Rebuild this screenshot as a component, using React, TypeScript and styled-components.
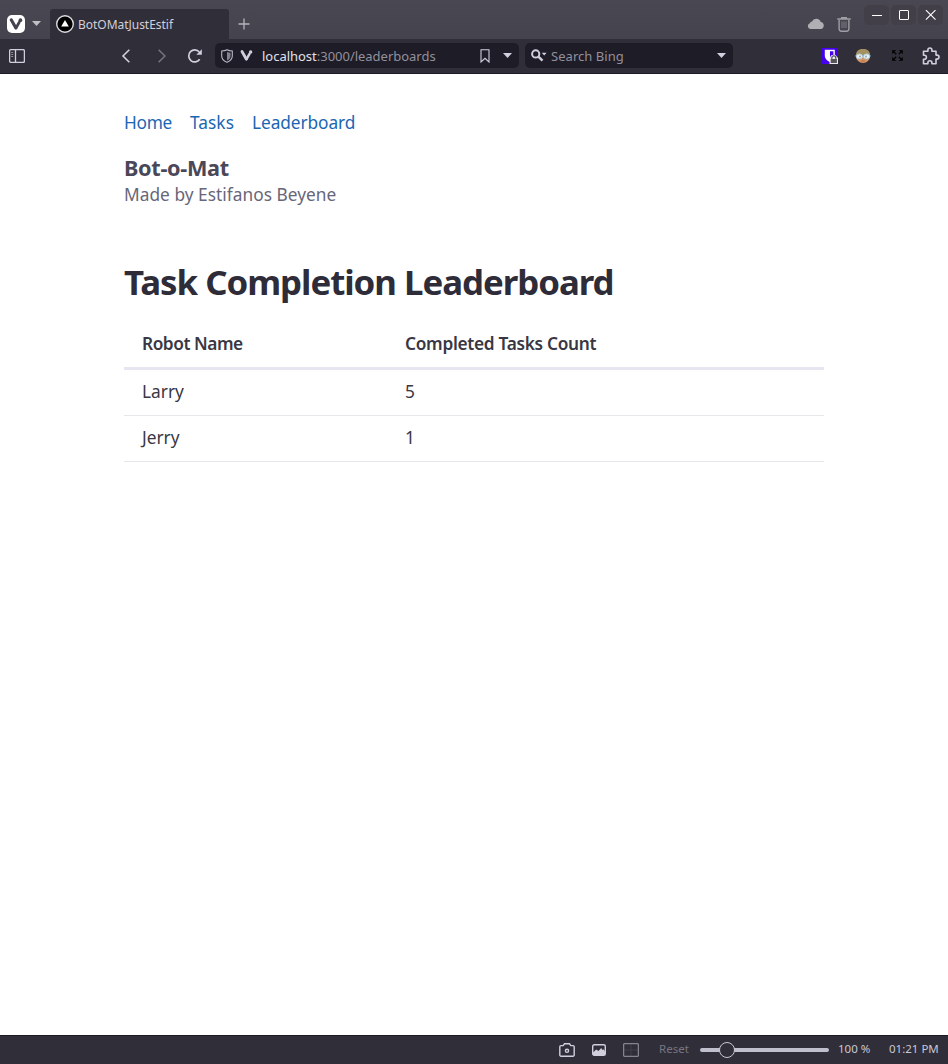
import React from "react";
import styled, { createGlobalStyle } from "styled-components";

const GlobalStyle = createGlobalStyle`
  * { box-sizing: border-box; }
  body { margin: 0; background: #fff; font-family: "Noto Sans", sans-serif; }
  svg { display: block; flex: none; }
`;

const Window = styled.div`
  display: flex;
  flex-direction: column;
  height: 1064px;
  width: 948px;
  overflow: hidden;
`;

const TabBar = styled.header`
  display: flex;
  flex: none;
  height: 39px;
  padding: 9px 5px 0 7px;
  background: linear-gradient(#494751, #45434d);
`;

const Slot = styled.span<{ $gap?: number; $top?: number }>`
  flex: none;
  margin-left: ${(p) => p.$gap ?? 0}px;
  margin-top: ${(p) => p.$top ?? 0}px;
`;

const Tab = styled.div`
  display: flex;
  gap: 4px;
  width: 179px;
  height: 30px;
  margin-left: 9px;
  padding: 5px 6px;
  border-radius: 3px 3px 0 0;
  background: #302e38;
  color: #d0cfdb;
  font-size: 12px;
  line-height: 22px;
`;

const TabTitle = styled.span`
  white-space: nowrap;
  letter-spacing: -0.03px;
`;

const Spacer = styled.div`
  flex: 1;
`;

const WindowButtons = styled.div`
  display: flex;
  gap: 2px;
  margin: -4px 0 0 13px;
`;

const WindowButton = styled.button`
  display: grid;
  place-items: center;
  width: 25px;
  height: 20px;
  padding: 0;
  border: 0;
  border-radius: 5px;
  background: #433f49;
`;

const Toolbar = styled.div`
  display: flex;
  flex: none;
  align-items: center;
  height: 35px;
  padding: 0 8px 1px 9px;
  background: #302e38;
  border-bottom: 1px solid #1c1a24;
`;

const Field = styled.div<{ $width: number; $gap: number }>`
  display: flex;
  align-items: center;
  width: ${(p) => p.$width}px;
  height: 25px;
  margin-left: ${(p) => p.$gap}px;
  padding: 0 7px 0 6px;
  border-radius: 5px;
  background: #1e1c26;
  color: #92909d;
  font-size: 13px;
  line-height: 20px;
  white-space: nowrap;
`;

const FieldText = styled.span<{ $gap: number; $spacing?: number }>`
  margin-left: ${(p) => p.$gap}px;
  letter-spacing: ${(p) => p.$spacing ?? 0}px;
`;

const Host = styled.span`
  color: #e2e1eb;
`;

const Page = styled.main`
  flex: 1;
  width: 700px;
  margin: 0 auto;
  padding-top: 35px;
  font-size: 18px;
  line-height: 27px;
`;

const Nav = styled.nav`
  display: flex;
  gap: 18px;
  height: 27px;
`;

const NavLink = styled.a<{ $width: number; $spacing: number }>`
  width: ${(p) => p.$width}px;
  color: #1a66b3;
  font-size: 17.3px;
  letter-spacing: ${(p) => p.$spacing}px;
  text-decoration: none;
  white-space: nowrap;
`;

const SiteName = styled.h2`
  margin: 18px 0 0;
  color: #4a4858;
  font-size: 21.7px;
  font-weight: 700;
  letter-spacing: -0.32px;
  line-height: 27px;
`;

const Byline = styled.p`
  margin: 0;
  color: #686679;
  font-size: 17.3px;
  letter-spacing: 0.03px;
`;

const Title = styled.h1`
  margin: 53px 0 0;
  color: #2e2c38;
  font-size: 34.8px;
  font-weight: 700;
  letter-spacing: -1.02px;
  line-height: 42px;
  white-space: nowrap;
`;

const Table = styled.table`
  width: 700px;
  margin-top: 18px;
  border-collapse: separate;
  border-spacing: 0;
  table-layout: fixed;
  color: #393744;
`;

const HeadCell = styled.th<{ $width?: number; $spacing: number }>`
  width: ${(p) => (p.$width ? p.$width + "px" : "auto")};
  height: 49px;
  padding: 0 18px 2px;
  border-bottom: 3px solid #e7e6f0;
  font-size: 17.3px;
  font-weight: 600;
  letter-spacing: ${(p) => p.$spacing}px;
  text-align: left;
`;

const Cell = styled.td`
  height: 46px;
  padding: 0 18px 2px;
  border-bottom: 1px solid #e7e6ea;
  font-size: 17.3px;
  letter-spacing: 0;
`;

const StatusBar = styled.footer`
  display: flex;
  flex: none;
  align-items: center;
  height: 29px;
  padding-left: 559px;
  border-top: 1px solid #1c1a24;
  background: #302e38;
  color: #c9c8d5;
  font-size: 11.5px;
  line-height: 18px;
  white-space: nowrap;
`;

const StatusText = styled.span<{ $gap: number; $width: number; $dim?: boolean }>`
  flex: none;
  width: ${(p) => p.$width}px;
  margin-left: ${(p) => p.$gap}px;
  padding-bottom: 2px;
  color: ${(p) => (p.$dim ? "#777582" : "inherit")};
`;

const Slider = styled.div`
  display: flex;
  align-items: center;
  width: 129px;
  height: 4px;
  margin-left: 11px;
  padding-left: 19px;
  border-radius: 2px;
  background: #c0bfce;
`;

const Thumb = styled.div`
  flex: none;
  width: 16px;
  height: 16px;
  border: 1px solid #c9c8d5;
  border-radius: 50%;
  background: #302e38;
`;

const light = "#cfcfdd";

function VMark({ size, color }: { size: number; color: string }) {
  return (
    <svg width={size} height={size} viewBox="0 0 12 12" fill="none" stroke={color} strokeLinecap="round" strokeLinejoin="round">
      <path d="M1.9 2.4 5.8 9.3" strokeWidth="2.7" />
      <path d="M6 9.4 8.8 4.5" strokeWidth="2.3" />
      <circle cx="9.8" cy="2.7" r="1.6" fill={color} stroke="none" />
    </svg>
  );
}

function Caret({ width = 9, color = light }: { width?: number; color?: string }) {
  return (
    <svg width={width} height="5" viewBox="0 0 9 5" fill={color}>
      <path d="M0 0H9L4.5 5Z" />
    </svg>
  );
}

const VivaldiButton = styled.div`
  display: grid;
  place-items: center;
  flex: none;
  width: 18px;
  height: 18px;
  margin-top: 6px;
  border-radius: 5px;
  background: #fff;
`;

function Tabs() {
  return (
    <TabBar>
      <VivaldiButton><VMark size={14} color="#45434d" /></VivaldiButton>
      <Slot $gap={7} $top={12}><Caret color="#c0bfc5" /></Slot>
      <Tab>
        <svg width="18" height="20" viewBox="0 0 18 20">
          <circle cx="9" cy="10" r="8.3" fill="#000" stroke="#dddce2" strokeWidth="1.4" />
          <path d="M9 6 12.8 12.5H5.2Z" fill="#fff" />
        </svg>
        <TabTitle>BotOMatJustEstif</TabTitle>
      </Tab>
      <Slot $gap={9} $top={9}>
        <svg width="12" height="12" viewBox="0 0 12 12" stroke="#b6b4bb" strokeWidth="1.3"><path d="M6 .5v11M.5 6h11" /></svg>
      </Slot>
      <Spacer />
      <Slot $top={9}>
        <svg width="18" height="12" viewBox="0 0 18 12" fill="#b0afb4">
          <path d="M3.5 11A3 3 0 0 1 2.8 5.2 3.2 3.2 0 0 1 5 3.5 4.7 4.7 0 0 1 13.7 4 3.6 3.6 0 0 1 14.2 11Z" />
        </svg>
      </Slot>
      <Slot $gap={12} $top={8}>
        <svg width="14" height="15" viewBox="0 0 14 15" fill="none" stroke="#a09ea5">
          <path d="M2.1 3v9A2.2 2.2 0 0 0 4 14.2h6a2.2 2.2 0 0 0 1.9-2.2V3" strokeWidth="1.4" />
          <path d="M.3 2h13.4M4 .7h6" strokeWidth="1.4" />
          <path d="M5 4.5V11M7 4.5V11M9 4.5V11" stroke="#7e7c85" />
        </svg>
      </Slot>
      <WindowButtons>
        <WindowButton><svg width="11" height="11"><path d="M1 5.5h10" stroke="#fff" /></svg></WindowButton>
        <WindowButton><svg width="11" height="11"><rect x="1.5" y=".5" width="9" height="9" rx=".5" fill="none" stroke="#fff" /></svg></WindowButton>
        <WindowButton><svg width="11" height="11"><path d="m.9.1 9.6 9.6m0-9.6L.9 9.7" stroke="#fff" strokeWidth="1.1" /></svg></WindowButton>
      </WindowButtons>
    </TabBar>
  );
}

function AddressBar() {
  return (
    <Toolbar>
      <svg width="16" height="14" viewBox="0 0 16 14" fill="none" stroke={light} strokeWidth="1.3">
        <rect x=".6" y=".6" width="14.8" height="12.8" rx="1.3" />
        <path d="M6.5 1v12" />
        <path d="M2.2 3.5h2M2.2 5.5h2M2.2 7.5h2" stroke="#91909d" strokeWidth="1" />
      </svg>
      <Slot $gap={96}><svg width="10" height="14" fill="none" stroke={light} strokeWidth="1.6"><path d="M8.3.8 2 7l6.3 6.2" /></svg></Slot>
      <Slot $gap={26}><svg width="10" height="14" fill="none" stroke="#777580" strokeWidth="1.5"><path d="M1.6.8 7.9 7l-6.3 6.2" /></svg></Slot>
      <Slot $gap={20}>
        <svg width="16" height="16" viewBox="0 0 16 16" fill="none" stroke={light} strokeWidth="1.7">
          <path d="M12.7 11.3A6 6 0 1 1 12.3 4" />
          <path d="M14.8 1.2v5.5H9.3Z" fill={light} stroke="none" />
        </svg>
      </Slot>
      <Field $width={304} $gap={12}>
        <svg width="12" height="14" viewBox="0 0 12 14">
          <path d="M6 .8C4.3 1.8 2.6 2 .7 2v5c0 3 2 5 5.3 6.3C9.3 12 11.3 10 11.3 7V2C9.4 2 7.7 1.8 6 .8Z" fill="none" stroke="#b8b7c5" strokeWidth="1.1" />
          <path d="M6 3C7.3 3.6 8.2 3.7 9.5 3.8V7c0 2-1.3 3.5-3.5 4.5Z" fill="#858391" />
        </svg>
        <Slot $gap={7}><VMark size={13} color={light} /></Slot>
        <FieldText $gap={9} $spacing={-0.02}><Host>localhost</Host>:3000/leaderboards</FieldText>
        <Spacer />
        <svg width="10" height="14" fill="none" stroke={light} strokeWidth="1.1"><path d="M1 .8h8V13L5 9.3 1 13Z" /></svg>
        <Slot $gap={13}><Caret /></Slot>
      </Field>
      <Field $width={208} $gap={6}>
        <svg width="16" height="13" viewBox="0 0 16 13" fill="none" stroke={light}>
          <circle cx="4.7" cy="4.9" r="3.6" strokeWidth="2" />
          <path d="m7.4 7.6 4.1 4.1" strokeWidth="2.4" />
          <path d="M10.8 3.7h4.8l-2.4 2.7Z" fill={light} stroke="none" />
        </svg>
        <FieldText $gap={4} $spacing={0.04}>Search Bing</FieldText>
        <Spacer />
        <Caret />
      </Field>
      <Spacer />
      <svg width="16" height="16" viewBox="0 0 16 16">
        <path fill="#4500ed" d="M0 0h16v16H0Z" />
        <path d="M2.8 1.8h10v6c0 3-2 5-5 6.2C4.5 12.5 2.8 10.3 2.8 7.8Z" fill="#fff" />
        <path d="M8 3.2h3.4v5c0 1.8-1.3 3-3.4 4Z" fill="#4500ed" />
        <path d="M7.5 16V10l2-3h4l2.5 3v6Z" fill="#e8e6ee" />
        <path d="M9.8 11.5V9.9a2 2 0 0 1 4 0v1.6" fill="none" stroke="#555" strokeWidth="1.2" />
        <path d="M8.7 11h6.2v4H8.7Z" fill="#555" />
      </svg>
      <Slot $gap={17}>
        <svg width="16" height="16" viewBox="0 0 16 16">
          <circle cx="8" cy="8" r="7" fill="#d59667" />
          <path d="M1 7C.9 3 4 1 8 1s7.1 2 7 6H1Z" fill="#a59060" />
          <path d="M0 7.7h16" stroke="#497795" strokeWidth="1.5" />
          <ellipse cx="4.4" cy="8.4" rx="3.1" ry="2.5" fill="#e9f3f5" stroke="#b2cbd4" />
          <ellipse cx="11.6" cy="8.4" rx="3.1" ry="2.5" fill="#e9f3f5" stroke="#b2cbd4" />
          <circle cx="5" cy="8.4" r="1" fill="#8fa9b4" /><circle cx="11" cy="8.4" r="1" fill="#8fa9b4" />
          <path d="M6.3 13h3.4" stroke="#ad6848" />
        </svg>
      </Slot>
      <Slot $gap={21}>
        <svg width="11" height="11" viewBox="0 0 11 11" fill="#050505" stroke="#050505" strokeWidth="1.3">
          <path d="M.5.5h3l-3 3ZM10.5.5h-3l3 3ZM.5 10.5h3l-3-3ZM10.5 10.5h-3l3-3Z" strokeWidth=".7" />
          <path d="m1 1 3.2 3.2M10 1 6.8 4.2M1 10l3.2-3.2M10 10 6.8 6.8" />
        </svg>
      </Slot>
      <Slot $gap={19}>
        <svg width="18" height="18" viewBox="0 0 18 18" fill="none" stroke={light} strokeWidth="1.6" strokeLinejoin="round">
          <path d="M1.5 4.2h4.4V3a2 2 0 0 1 4 0v1.2H14v3.9h1a2 2 0 0 1 0 4h-1v4.6H9.9v-1a2 2 0 0 0-4 0v1H1.5v-4.4h.9a2 2 0 0 0 0-4h-.9Z" />
        </svg>
      </Slot>
    </Toolbar>
  );
}

const robots = [
  { name: "Larry", completed: 5 },
  { name: "Jerry", completed: 1 },
];

function Leaderboard() {
  return (
    <Page>
      <Nav>
        <NavLink $width={48} $spacing={-0.3}>Home</NavLink>
        <NavLink $width={44} $spacing={0.05}>Tasks</NavLink>
        <NavLink $width={104} $spacing={-0.08}>Leaderboard</NavLink>
      </Nav>
      <SiteName>Bot-o-Mat</SiteName>
      <Byline>Made by Estifanos Beyene</Byline>
      <Title>Task Completion Leaderboard</Title>
      <Table>
        <thead>
          <tr>
            <HeadCell $width={263} $spacing={-0.45}>Robot Name</HeadCell>
            <HeadCell $spacing={-0.3}>Completed Tasks Count</HeadCell>
          </tr>
        </thead>
        <tbody>
          {robots.map((robot) => (
            <tr key={robot.name}>
              <Cell>{robot.name}</Cell>
              <Cell>{robot.completed}</Cell>
            </tr>
          ))}
        </tbody>
      </Table>
    </Page>
  );
}

function Status() {
  return (
    <StatusBar>
      <svg width="16" height="14" viewBox="0 0 16 14" fill="none" stroke={light} strokeWidth="1.4">
        <path d="M2 2.6h2.2L5.5.8h5l1.3 1.8H14a1.2 1.2 0 0 1 1.2 1.2V12a1.2 1.2 0 0 1-1.2 1.2H2A1.2 1.2 0 0 1 .8 12V3.8A1.2 1.2 0 0 1 2 2.6Z" />
        <circle cx="8" cy="7.8" r="1.6" />
      </svg>
      <Slot $gap={17}>
        <svg width="14" height="12" viewBox="0 0 14 12" fill="none" stroke={light} strokeWidth="1.4">
          <rect x=".7" y=".7" width="12.6" height="10.6" rx="1.5" />
          <path d="M1 11V8.5l3.2-3L6.5 7l2.7-3 1.3 2 1-.8L13 7.5V11Z" fill={light} stroke="none" />
        </svg>
      </Slot>
      <Slot $gap={17}>
        <svg width="16" height="14" viewBox="0 0 16 14" fill="none" stroke="#85838f" strokeWidth="1.3">
          <path d="M8 1v12M1 7h14" stroke="#413f49" strokeWidth="1" />
          <rect x=".6" y=".6" width="14.8" height="12.8" rx="1.2" />
        </svg>
      </Slot>
      <StatusText $gap={20} $width={30} $dim>Reset</StatusText>
      <Slider><Thumb /></Slider>
      <StatusText $gap={9} $width={33}>100 %</StatusText>
      <StatusText $gap={18} $width={50}>01:21 PM</StatusText>
    </StatusBar>
  );
}

export default function App() {
  return (
    <Window>
      <GlobalStyle />
      <Tabs />
      <AddressBar />
      <Leaderboard />
      <Status />
    </Window>
  );
}
